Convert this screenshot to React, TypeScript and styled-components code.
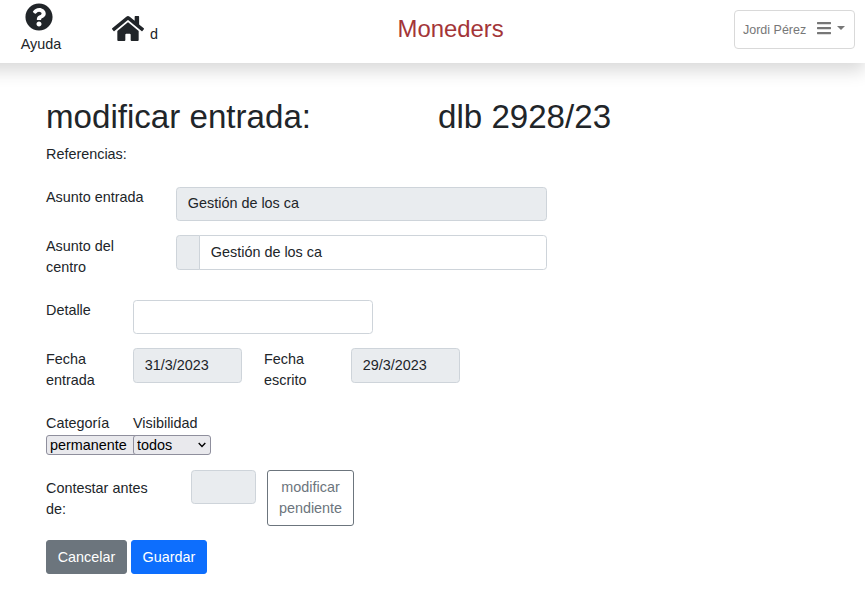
import React from 'react';
import styled, { createGlobalStyle, css } from 'styled-components';
import { FaQuestionCircle, FaHome, FaBars } from 'react-icons/fa';

const GlobalStyle = createGlobalStyle`
  *, *::before, *::after { box-sizing: border-box; }
  body {
    margin: 0;
    background: #fff;
    color: #212529;
    font-family: "Liberation Sans", Arial, sans-serif;
    font-size: 14.4px;
    line-height: 21.6px;
    overflow: hidden;
  }
`;

const Header = styled.header`
  display: flex;
  align-items: flex-start;
  height: 63px;
  margin-left: -20px;
  padding-left: 20px;
  background: #fff;
  box-shadow: 0 8px 16px rgba(0, 0, 0, 0.15);
`;

const HelpLink = styled.a`
  display: flex;
  flex-direction: column;
  align-items: center;
  width: 40px;
  margin-left: 21px;
  padding-top: 3px;
  svg { width: 28px; height: 28px; margin: 0 4px 3px 0; }
`;

const HomeLink = styled.a`
  display: flex;
  align-items: flex-start;
  width: 60px;
  margin: 14px 0 0 51px;
  svg { width: 32px; height: 29px; flex: none; }
  span { margin: 10px 0 0 6px; }
`;

const Brand = styled.div`
  flex: 1;
  margin: 11px 0 0 225.5px;
  color: #a33538;
  font-size: 23.9px;
  line-height: 36px;
`;

const UserMenu = styled.button`
  display: flex;
  align-items: center;
  width: 121px;
  height: 39px;
  margin: 10px 10px 0 0;
  padding: 0 0 0 8px;
  border: 1px solid #d9d9d9;
  border-radius: 4px;
  background: #fff;
  color: #777;
  font: 12.5px "Liberation Sans", Arial, sans-serif;
  white-space: nowrap;
  svg { width: 14px; height: 16px; margin: 0 6px 3px 11px; flex: none; }
`;

const Caret = styled.span`
  border: 4px solid transparent;
  border-top-color: currentColor;
  border-bottom: 0;
  margin-bottom: 3px;
`;

const Form = styled.form`
  padding: 33px 0 0 46px;
`;

const Titles = styled.div`
  display: grid;
  grid-template-columns: 392px 1fr;
  height: 47px;
`;

const Title = styled.h2`
  margin: 0;
  font-size: 33.12px;
  font-weight: 500;
  line-height: 41px;
`;

const Row = styled.div<{ $columns: string; $height: number; $gap?: number }>`
  display: grid;
  grid-template-columns: ${p => p.$columns};
  column-gap: ${p => p.$gap ?? 0}px;
  align-items: start;
  align-content: start;
  height: ${p => p.$height}px;
`;

const Label = styled.label<{ $drop?: number; $width?: number }>`
  width: ${p => (p.$width ? `${p.$width}px` : 'auto')};
  padding-top: ${p => p.$drop ?? 0}px;
  line-height: 21px;
`;

const controlStyle = css`
  border: 1px solid #ced4da;
  border-radius: 3.6px;
  color: #212529;
  font: 14.4px/21px "Liberation Sans", Arial, sans-serif;
`;

const Input = styled.input<{ $tall?: boolean; $joined?: boolean }>`
  ${controlStyle}
  width: 100%;
  min-width: 0;
  height: ${p => (p.$tall ? 35 : 34)}px;
  padding: 0 10.8px 2px;
  background: #fff;
  &:disabled { background: #e9ecef; opacity: 1; }
  ${p => p.$joined && css`
    margin-left: -1px;
    border-top-left-radius: 0;
    border-bottom-left-radius: 0;
  `}
`;

const InputGroup = styled.div`
  display: flex;
`;

const Prefix = styled.span`
  ${controlStyle}
  flex: 0 0 24px;
  border-radius: 3.6px 0 0 3.6px;
  background: #e9ecef;
`;

const Select = styled.select<{ $width: number }>`
  display: block;
  appearance: none;
  width: ${p => p.$width}px;
  height: 20px;
  padding: 0 3px;
  border: 1px solid #8f8f9d;
  border-radius: 3px;
  background: #e9e9ed;
  color: #000;
  font: 14.4px "Liberation Sans", Arial, sans-serif;
`;

const SelectBox = styled.div`
  position: relative;
  width: max-content;
  margin-top: 1px;
  svg {
    position: absolute;
    right: 5px;
    top: 7px;
    pointer-events: none;
  }
`;

const Chevron = () => (
  <svg width="8" height="6" viewBox="0 0 8 6" fill="none" stroke="#000" strokeWidth="1.4">
    <path d="M0.7 1 L4 4.4 L7.3 1" />
  </svg>
);

const Button = styled.button<{ $tone: 'outline' | 'secondary' | 'primary'; $width: number }>`
  width: ${p => p.$width}px;
  height: ${p => (p.$tone === 'outline' ? 56 : 34)}px;
  padding: ${p => (p.$tone === 'outline' ? 0 : 1)}px 0 0;
  border: 1px solid;
  border-radius: 3px;
  font: 14.4px/21px "Liberation Sans", Arial, sans-serif;
  ${p => p.$tone === 'outline' && css`background: #fff; border-color: #6c757d; color: #6c757d;`}
  ${p => p.$tone === 'secondary' && css`background: #6c757d; border-color: #6c757d; color: #fff;`}
  ${p => p.$tone === 'primary' && css`background: #0d6efd; border-color: #0d6efd; color: #fff;`}
`;

const Actions = styled.div`
  display: flex;
  gap: 4px;
`;

export default function App() {
  return (
    <>
      <GlobalStyle />
      <Header>
        <HelpLink><FaQuestionCircle /><span>Ayuda</span></HelpLink>
        <HomeLink><FaHome /><span>d</span></HomeLink>
        <Brand>Moneders</Brand>
        <UserMenu type="button">Jordi Pérez<FaBars /><Caret /></UserMenu>
      </Header>
      <Form onSubmit={e => e.preventDefault()}>
        <Titles>
          <Title>modificar entrada:</Title>
          <Title>dlb 2928/23</Title>
        </Titles>
        <Row $columns="1fr" $height={44}><Label $drop={1}>Referencias:</Label></Row>
        <Row $columns="130px 371px" $height={48}>
          <Label>Asunto entrada</Label>
          <Input disabled defaultValue="Gestión de los ca" />
        </Row>
        <Row $columns="130px 371px" $height={65}>
          <Label $drop={1} $width={90}>Asunto del centro</Label>
          <InputGroup>
            <Prefix />
            <Input $tall $joined defaultValue="Gestión de los ca" />
          </InputGroup>
        </Row>
        <Row $columns="87px 240px" $height={48}>
          <Label>Detalle</Label>
          <Input />
        </Row>
        <Row $columns="65px 109px 65px 109px" $gap={22} $height={64}>
          <Label $drop={1}>Fecha entrada</Label>
          <Input $tall disabled defaultValue="31/3/2023" />
          <Label $drop={1}>Fecha escrito</Label>
          <Input $tall disabled defaultValue="29/3/2023" />
        </Row>
        <Row $columns="87px 1fr" $height={58}>
          <Label $drop={1}>Categoría</Label>
          <Label $drop={1}>Visibilidad</Label>
          <SelectBox><Select $width={104}><option>permanente</option></Select><Chevron /></SelectBox>
          <SelectBox><Select $width={78}><option>todos</option></Select><Chevron /></SelectBox>
        </Row>
        <Row $columns="134px 65px 87px" $gap={11} $height={70}>
          <Label $drop={8} $width={120}>Contestar antes de:</Label>
          <Input disabled />
          <Button type="button" $tone="outline" $width={87}>modificar<br />pendiente</Button>
        </Row>
        <Actions>
          <Button type="button" $tone="secondary" $width={81}>Cancelar</Button>
          <Button type="submit" $tone="primary" $width={76}>Guardar</Button>
        </Actions>
      </Form>
    </>
  );
}
